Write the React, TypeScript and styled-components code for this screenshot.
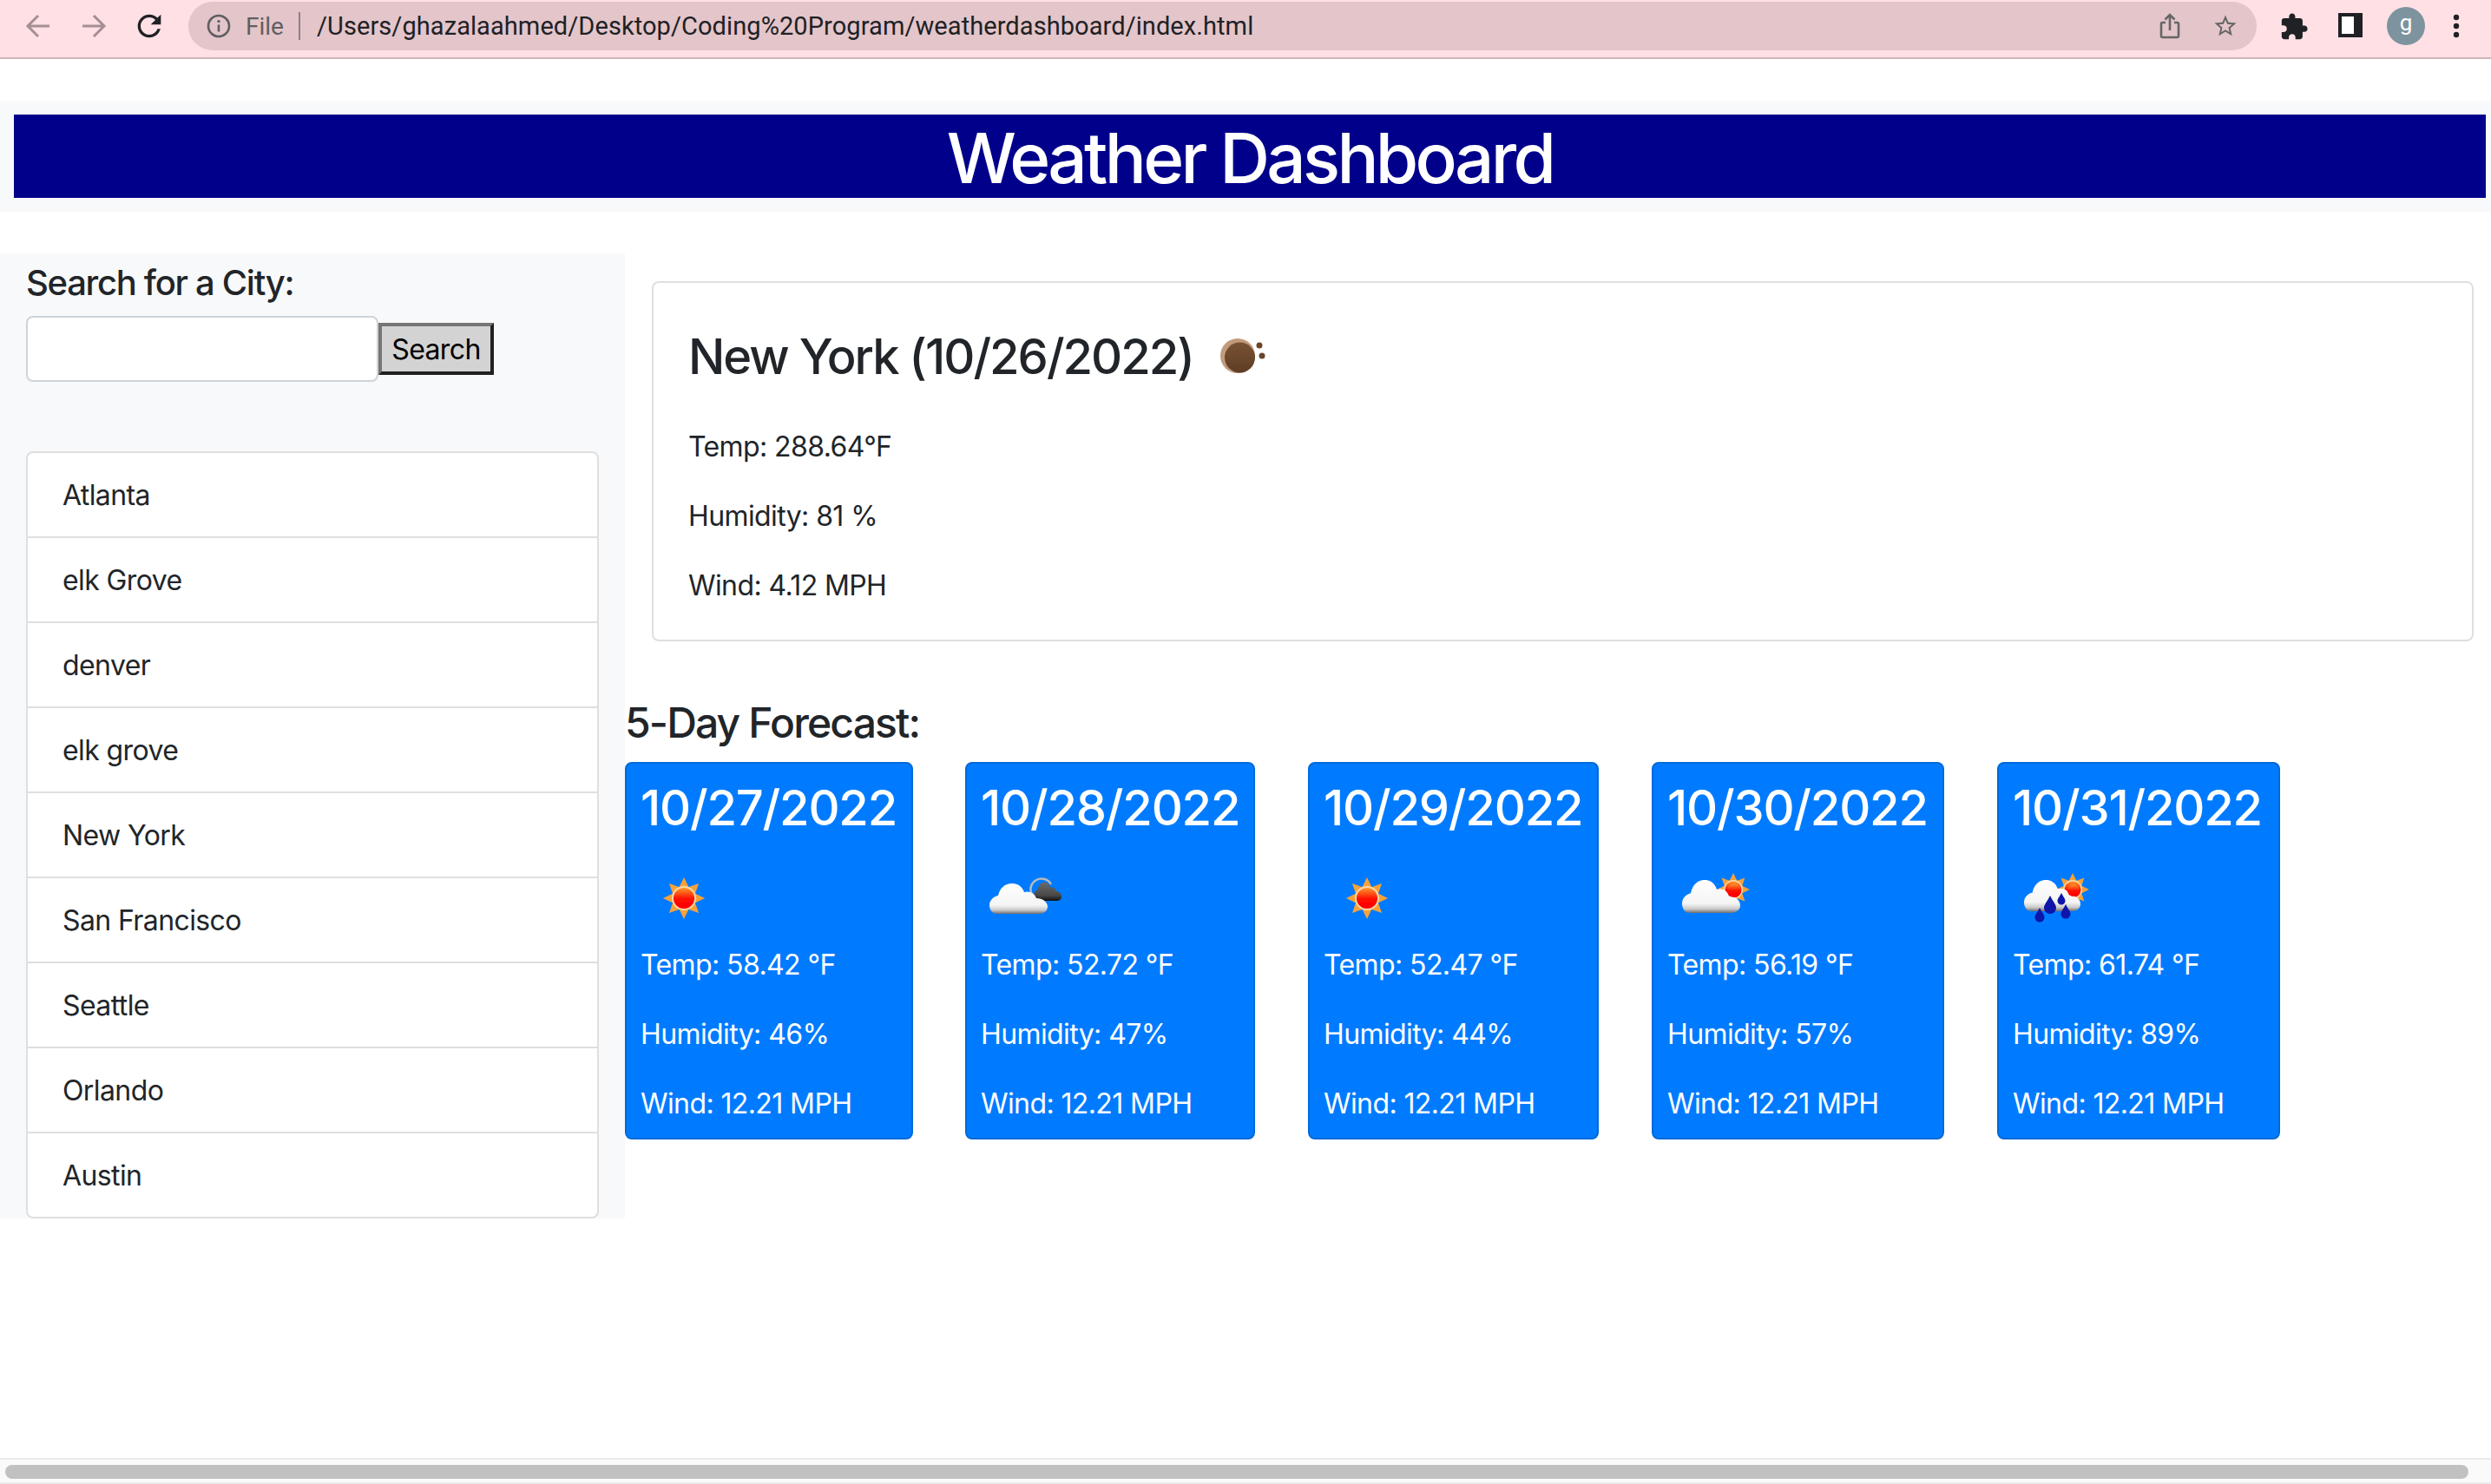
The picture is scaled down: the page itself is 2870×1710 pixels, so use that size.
import styled, { createGlobalStyle } from "styled-components";

const cities = [
  "Atlanta",
  "elk Grove",
  "denver",
  "elk grove",
  "New York",
  "San Francisco",
  "Seattle",
  "Orlando",
  "Austin",
];

type IconKind = "sun" | "clouds" | "partly" | "rain";

const forecast: {
  date: string;
  icon: IconKind;
  temp: string;
  humidity: string;
  width: number;
  gap: number;
}[] = [
  { date: "10/27/2022", icon: "sun", temp: "58.42", humidity: "46", width: 332, gap: 60 },
  { date: "10/28/2022", icon: "clouds", temp: "52.72", humidity: "47", width: 334, gap: 61 },
  { date: "10/29/2022", icon: "sun", temp: "52.47", humidity: "44", width: 335, gap: 61 },
  { date: "10/30/2022", icon: "partly", temp: "56.19", humidity: "57", width: 337, gap: 61 },
  { date: "10/31/2022", icon: "rain", temp: "61.74", humidity: "89", width: 326, gap: 0 },
];

const GlobalStyle = createGlobalStyle`
  html, body {
    margin: 0;
    padding: 0;
    background: #fff;
  }
  body {
    font-family: Inter, "Liberation Sans", sans-serif;
    color: #212529;
    overflow: hidden;
  }
  * {
    box-sizing: border-box;
  }
`;

const Page = styled.div`
  width: 2870px;
  height: 1710px;
  display: flex;
  flex-direction: column;
`;

const Toolbar = styled.div`
  height: 68px;
  flex: none;
  display: flex;
  align-items: flex-start;
  background: #ffe0e5;
  border-bottom: 2px solid #d0b3b8;
  padding: 2px 0 0 24px;
`;

const NavButton = styled.div<{ $left?: number }>`
  width: 40px;
  height: 56px;
  flex: none;
  display: flex;
  align-items: center;
  justify-content: center;
  margin-left: ${(p) => p.$left ?? 0}px;
`;

const Omnibox = styled.div`
  width: 2383px;
  height: 56px;
  margin-left: 25px;
  flex: none;
  display: flex;
  align-items: center;
  background: #e3c5ca;
  border-radius: 28px;
  padding: 0 21px;
  font-family: Roboto, sans-serif;
`;

const FileLabel = styled.span`
  color: #5f5f62;
  margin-left: 17px;
  font-size: 28px;
`;

const Divider = styled.span`
  width: 2px;
  height: 32px;
  background: #8e8286;
  margin: 0 19px 0 17px;
`;

const Address = styled.span`
  color: #202124;
  font-size: 29px;
  letter-spacing: 0.08px;
  flex: 1;
`;

const OmniIcon = styled.span<{ $left?: number }>`
  display: flex;
  margin-left: ${(p) => p.$left ?? 0}px;
`;

const Avatar = styled.div`
  width: 44px;
  height: 44px;
  margin: 6px 0 0 28px;
  flex: none;
  border-radius: 50%;
  background: #7d939e;
  color: #fff;
  font-family: Roboto, sans-serif;
  font-size: 26px;
  display: flex;
  align-items: center;
  justify-content: center;
  padding-bottom: 8px;
`;

const ToolIcon = styled.div<{ $left: number }>`
  display: flex;
  flex: none;
  margin: 12px 0 0 ${(p) => p.$left}px;
`;

const NavBar = styled.div`
  margin-top: 48px;
  height: 128px;
  flex: none;
  background: #f8f9fa;
  padding: 16px 6px 16px 16px;
`;

const Title = styled.h1`
  margin: 0;
  height: 96px;
  background: #00008b;
  color: #fff;
  font-size: 80px;
  font-weight: 540;
  line-height: 99px;
  letter-spacing: -3.7px;
  text-align: center;
`;

const Content = styled.div`
  margin-top: 48px;
  display: grid;
  grid-template-columns: 720px 1fr;
  align-items: start;
`;

const Sidebar = styled.aside`
  height: 1112px;
  background: #f8f9fa;
  padding: 0 30px;
`;

const SearchLabel = styled.div`
  font-size: 40px;
  font-weight: 540;
  line-height: 48px;
  letter-spacing: -1.3px;
  padding-top: 10px;
  height: 72px;
`;

const SearchRow = styled.div`
  display: flex;
  align-items: center;
  height: 76px;
`;

const SearchInput = styled.input`
  width: 406px;
  height: 76px;
  border: 2px solid #ced4da;
  border-radius: 8px;
  background: #fff;
  outline: none;
`;

const SearchButton = styled.button`
  width: 133px;
  height: 60px;
  padding: 0;
  background: #d3d3d3;
  border-width: 4px;
  border-style: solid;
  border-color: #767676 #212121 #212121 #767676;
  color: #000;
  font-family: inherit;
  font-size: 32px;
  letter-spacing: -0.6px;
`;

const CityList = styled.ul`
  list-style: none;
  margin: 80px 0 0;
  padding: 0;
  border: 2px solid #dfdfdf;
  border-radius: 8px;
  background: #fff;
`;

const CityItem = styled.li`
  height: 98px;
  padding: 25px 40px;
  font-size: 32px;
  line-height: 48px;
  letter-spacing: -0.6px;
  border-bottom: 2px solid #dfdfdf;

  &:last-child {
    height: 96px;
    border-bottom: none;
  }
`;

const Main = styled.main`
  min-width: 0;
`;

const CurrentCard = styled.section`
  height: 415px;
  margin: 32px 20px 0 31px;
  padding: 40px;
  background: #fff;
  border: 2px solid #dfdfdf;
  border-radius: 8px;
`;

const CurrentTitle = styled.h3`
  margin: 0 0 16px;
  height: 109px;
  display: flex;
  align-items: flex-start;
  font-size: 56px;
  font-weight: 540;
  line-height: 90px;
  letter-spacing: -2px;

  svg {
    margin: -6px 0 0 1px;
  }
`;

const Line = styled.p`
  margin: 0 0 32px;
  font-size: 32px;
  line-height: 48px;
  letter-spacing: -0.6px;

  &:last-child {
    margin-bottom: 0;
  }
`;

const ForecastHeading = styled.h4`
  margin: 65px 0 16px;
  font-size: 48px;
  font-weight: 540;
  line-height: 58px;
  letter-spacing: -1.85px;
`;

const ForecastRow = styled.div`
  display: flex;
`;

const ForecastCard = styled.article<{ $width: number; $gap: number }>`
  width: ${(p) => p.$width}px;
  height: 435px;
  margin-right: ${(p) => p.$gap}px;
  padding: 16px;
  flex: none;
  background: #007bff;
  border: 2px solid #0069d9;
  border-radius: 8px;
  color: #fff;
`;

const ForecastDate = styled.h3`
  margin: 2px 0 20px;
  font-size: 56px;
  font-weight: 540;
  line-height: 67px;
  letter-spacing: -1.2px;
  white-space: nowrap;
`;

const IconBox = styled.div`
  height: 103px;
  margin-left: 1px;
`;

const Spacer = styled.div`
  flex: 1;
`;

const ScrollTrack = styled.div`
  height: 30px;
  flex: none;
  background: #fafafa;
  border-top: 2px solid #ebebeb;
  border-bottom: 2px solid #ebebeb;
  padding: 6px 26px 4px 6px;
`;

const ScrollThumb = styled.div`
  height: 16px;
  border-radius: 8px;
  background: #c1c1c1;
`;

const Sun = ({ cx, cy, r }: { cx: number; cy: number; r: number }) => (
  <g>
    {[0, 45, 90, 135, 180, 225, 270, 315].map((a) => (
      <polygon
        key={a}
        points={`${cx - r * 0.4},${cy - r * 0.9} ${cx},${cy - r * 1.72} ${cx + r * 0.4},${cy - r * 0.9}`}
        fill="#f7a139"
        transform={`rotate(${a} ${cx} ${cy})`}
      />
    ))}
    <circle cx={cx} cy={cy} r={r} fill="#fbd9a8" />
    <circle cx={cx} cy={cy} r={r * 0.86} fill="url(#sunFill)" />
  </g>
);

const cloudPath =
  "M9 36C3 36 0 31 0 26C0 20 5 16 10 15C12 6 18 1 26 1C33 1 38 5 40 11C46 9 52 12 54 18C61 18 67 22 67 28C67 33 62 36 57 36Z";

const Cloud = ({ x, y, w, h, fill }: { x: number; y: number; w: number; h: number; fill: string }) => (
  <path
    d={cloudPath}
    fill={fill}
    transform={`translate(${x} ${y}) scale(${w / 67} ${h / 36})`}
  />
);

const Drop = ({ cx, cy, r }: { cx: number; cy: number; r: number }) => (
  <path
    d={`M${cx} ${cy - r * 2}C${cx + r * 0.5} ${cy - r} ${cx + r} ${cy - r * 0.5} ${cx + r} ${cy}A${r} ${r} 0 1 1 ${cx - r} ${cy}C${cx - r} ${cy - r * 0.5} ${cx - r * 0.5} ${cy - r} ${cx} ${cy - r * 2}Z`}
    fill="#0a12a8"
  />
);

const IconDefs = () => (
  <defs>
    <linearGradient id="sunFill" x1="0" y1="0" x2="0" y2="1">
      <stop offset="0" stopColor="#fb9a2c" />
      <stop offset="0.55" stopColor="#ff0a00" />
      <stop offset="1" stopColor="#ff0000" />
    </linearGradient>
    <linearGradient id="cloudFill" x1="0" y1="0" x2="0" y2="1">
      <stop offset="0" stopColor="#ffffff" />
      <stop offset="0.72" stopColor="#f4f4f4" />
      <stop offset="0.88" stopColor="#c8c8c8" />
      <stop offset="1" stopColor="#6f6f6f" />
    </linearGradient>
    <linearGradient id="darkCloudFill" x1="0" y1="0" x2="0" y2="1">
      <stop offset="0" stopColor="#6a6a6a" />
      <stop offset="0.7" stopColor="#4a4a4a" />
      <stop offset="1" stopColor="#111" />
    </linearGradient>
    <linearGradient id="moonFill" x1="0" y1="0" x2="0" y2="1">
      <stop offset="0" stopColor="#7a5233" />
      <stop offset="1" stopColor="#5d3d25" />
    </linearGradient>
    <filter id="soften" x="-10%" y="-10%" width="120%" height="120%">
      <feGaussianBlur stdDeviation="0.7" />
    </filter>
  </defs>
);

const WeatherIcon = ({ kind }: { kind: IconKind }) => (
  <svg width="100" height="100" viewBox="0 0 100 100">
    <IconDefs />
    <g filter="url(#soften)">
      {kind === "sun" && <Sun cx={49} cy={50} r={14} />}
      {kind === "clouds" && (
        <>
          <path d="M58 46a12 12 0 0 1 22-12" fill="none" stroke="#b9b9b9" strokeWidth="2.5" />
          <Cloud x={60} y={31} w={32} h={22} fill="url(#darkCloudFill)" />
          <Cloud x={9} y={32} w={67} h={36} fill="url(#cloudFill)" />
        </>
      )}
      {kind === "partly" && (
        <>
          <Sun cx={75} cy={40} r={11} />
          <Cloud x={16} y={28} w={67} h={39} fill="url(#cloudFill)" />
          <circle cx={76} cy={41} r={8} fill="url(#sunFill)" />
        </>
      )}
      {kind === "rain" && (
        <>
          <Sun cx={68} cy={40} r={11} />
          <Cloud x={12} y={28} w={65} h={37} fill="url(#cloudFill)" />
          <circle cx={69} cy={41} r={7} fill="url(#sunFill)" />
          <Drop cx={42} cy={61} r={7} />
          <Drop cx={55} cy={53} r={4.5} />
          <Drop cx={60} cy={68} r={5.5} />
          <Drop cx={30} cy={72} r={5.5} />
        </>
      )}
    </g>
  </svg>
);

const MoonIcon = () => (
  <svg width="100" height="100" viewBox="0 0 100 100">
    <IconDefs />
    <g filter="url(#soften)">
      <circle cx="50" cy="50" r="20" fill="#c39a7c" />
      <circle cx="52.5" cy="52" r="17.5" fill="url(#moonFill)" />
      <circle cx="75" cy="38" r="3.5" fill="#6b4529" />
      <circle cx="78" cy="50" r="3.5" fill="#6b4529" />
    </g>
  </svg>
);

const ArrowIcon = ({ flip }: { flip?: boolean }) => (
  <svg width="30" height="28" viewBox="0 0 30 28" style={flip ? { transform: "scaleX(-1)" } : undefined}>
    <path d="M15 2L3 14l12 12M3 14h25" fill="none" stroke="#a48f94" strokeWidth="3" />
  </svg>
);

const App = () => {
  return (
    <Page>
      <GlobalStyle />
      <Toolbar>
        <NavButton>
          <ArrowIcon />
        </NavButton>
        <NavButton $left={24}>
          <ArrowIcon flip />
        </NavButton>
        <NavButton $left={24}>
          <svg width="40" height="40" viewBox="0 0 24 24">
            <path
              fill="#202124"
              d="M17.65 6.35C16.2 4.9 14.21 4 12 4c-4.42 0-7.99 3.58-7.99 8s3.57 8 7.99 8c3.73 0 6.84-2.55 7.73-6h-2.08c-.82 2.33-3.04 4-5.65 4-3.31 0-6-2.69-6-6s2.69-6 6-6c1.66 0 3.14.69 4.22 1.78L13 11h7V4l-2.35 2.35z"
            />
          </svg>
        </NavButton>
        <Omnibox>
          <OmniIcon>
            <svg width="28" height="28" viewBox="0 0 28 28">
              <circle cx="14" cy="14" r="12" fill="none" stroke="#5f5f62" strokeWidth="2.6" />
              <path d="M14 12.5v8" stroke="#5f5f62" strokeWidth="2.6" />
              <circle cx="14" cy="8.6" r="1.7" fill="#5f5f62" />
            </svg>
          </OmniIcon>
          <FileLabel>File</FileLabel>
          <Divider />
          <Address>/Users/ghazalaahmed/Desktop/Coding%20Program/weatherdashboard/index.html</Address>
          <OmniIcon>
            <svg width="24" height="30" viewBox="0 0 24 30">
              <path
                d="M7 11H3.5A1.5 1.5 0 0 0 2 12.5v14A1.5 1.5 0 0 0 3.5 28h17a1.5 1.5 0 0 0 1.5-1.5v-14a1.5 1.5 0 0 0-1.5-1.5H17M12 20V2M6.5 7.5L12 2l5.500 5.500"
                fill="none"
                stroke="#666"
                strokeWidth="2.6"
              />
            </svg>
          </OmniIcon>
          <OmniIcon $left={37}>
            <svg width="30" height="30" viewBox="0 0 24 24">
              <path
                fill="#666"
                d="M22 9.240l-7.190-.620L12 2 9.190 8.630 2 9.240l5.460 4.730L5.820 21 12 17.270 18.180 21l-1.630-7.030L22 9.240zM12 15.400l-3.760 2.270 1-4.280-3.320-2.880 4.380-.380L12 6.100l1.710 4.040 4.380.380-3.320 2.880 1 4.280L12 15.400z"
              />
            </svg>
          </OmniIcon>
        </Omnibox>
        <ToolIcon $left={26}>
          <svg width="34" height="34" viewBox="0 0 24 24">
            <path
              fill="#202124"
              d="M20.500 11H19V7c0-1.100-.9-2-2-2h-4V3.500C13 2.120 11.880 1 10.500 1S8 2.120 8 3.500V5H4c-1.100 0-1.990.9-1.990 2v3.800H3.500c1.490 0 2.700 1.210 2.700 2.700s-1.210 2.700-2.700 2.700H2V20c0 1.100.9 2 2 2h3.800v-1.500c0-1.490 1.210-2.700 2.700-2.700 1.490 0 2.700 1.210 2.700 2.700V22H17c1.100 0 2-.9 2-2v-4h1.500c1.380 0 2.500-1.120 2.500-2.500S21.880 11 20.500 11z"
            />
          </svg>
        </ToolIcon>
        <ToolIcon $left={34}>
          <svg width="28" height="30" viewBox="0 0 28 30">
            <rect x="0" y="1" width="28" height="28" fill="#202124" />
            <rect x="4" y="5" width="14" height="20" fill="#fff" />
          </svg>
        </ToolIcon>
        <Avatar>g</Avatar>
        <ToolIcon $left={31}>
          <svg width="10" height="32" viewBox="0 0 10 32">
            <circle cx="5" cy="6" r="3.200" fill="#202124" />
            <circle cx="5" cy="16" r="3.200" fill="#202124" />
            <circle cx="5" cy="26" r="3.200" fill="#202124" />
          </svg>
        </ToolIcon>
      </Toolbar>

      <NavBar>
        <Title>Weather Dashboard</Title>
      </NavBar>

      <Content>
        <Sidebar>
          <SearchLabel>Search for a City:</SearchLabel>
          <SearchRow>
            <SearchInput />
            <SearchButton>Search</SearchButton>
          </SearchRow>
          <CityList>
            {cities.map((city) => (
              <CityItem key={city}>{city}</CityItem>
            ))}
          </CityList>
        </Sidebar>

        <Main>
          <CurrentCard>
            <CurrentTitle>
              New York (10/26/2022)
              <MoonIcon />
            </CurrentTitle>
            <Line>Temp: 288.64°F</Line>
            <Line>Humidity: 81 %</Line>
            <Line>Wind: 4.12 MPH</Line>
          </CurrentCard>

          <ForecastHeading>5-Day Forecast:</ForecastHeading>
          <ForecastRow>
            {forecast.map((day) => (
              <ForecastCard key={day.date} $width={day.width} $gap={day.gap}>
                <ForecastDate>{day.date}</ForecastDate>
                <IconBox>
                  <WeatherIcon kind={day.icon} />
                </IconBox>
                <Line>Temp: {day.temp} °F</Line>
                <Line>Humidity: {day.humidity}%</Line>
                <Line>Wind: 12.21 MPH</Line>
              </ForecastCard>
            ))}
          </ForecastRow>
        </Main>
      </Content>

      <Spacer />
      <ScrollTrack>
        <ScrollThumb />
      </ScrollTrack>
    </Page>
  );
};

export default App;
